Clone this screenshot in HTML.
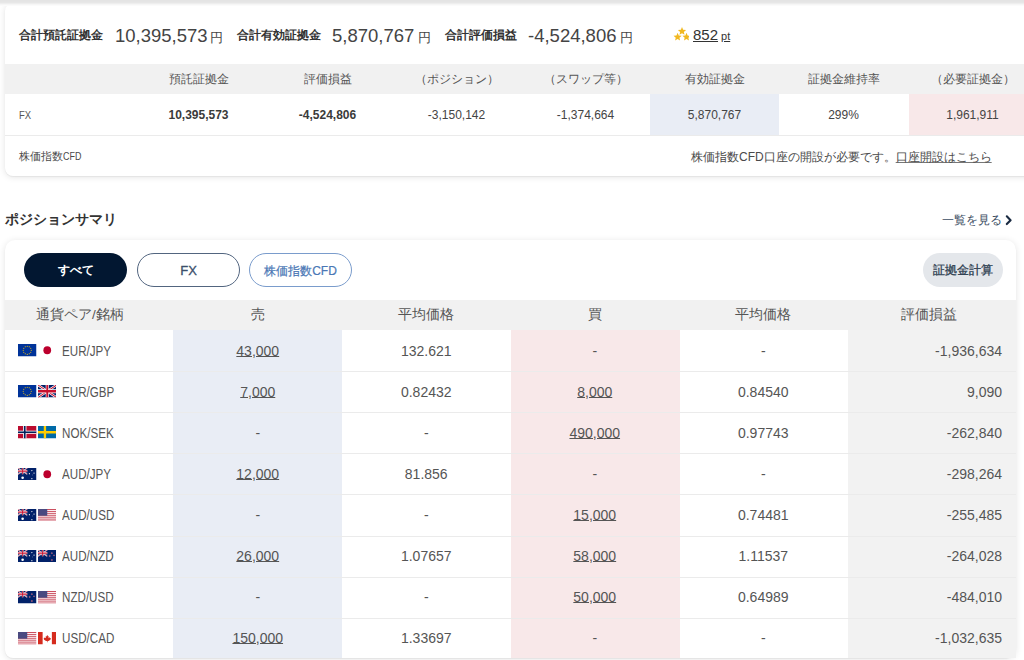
<!DOCTYPE html>
<html><head><meta charset="utf-8">
<style>
html,body{margin:0;padding:0;width:1024px;height:660px;overflow:hidden;background:#fff;font-family:"Liberation Sans",sans-serif;color:#333;}
.abs{position:absolute;}
.topband{position:absolute;left:0;width:1024px;height:1px;z-index:5;}
.card1{position:absolute;left:5px;top:3px;width:1032px;height:173px;background:#fff;border-radius:8px;box-shadow:0 1px 1px rgba(0,0,0,0.05),0 1px 7px rgba(0,0,0,0.11);overflow:hidden;}
.card2{position:absolute;left:5px;top:240px;width:1011px;height:418px;background:#fff;border-radius:10px 10px 10px 8px;box-shadow:0 1px 1px rgba(0,0,0,0.05),0 1px 7px rgba(0,0,0,0.11);}
.t{position:absolute;white-space:nowrap;}
.lbl{font-size:12px;font-weight:bold;color:#333;margin-top:-1px;}
.big{font-size:18.5px;color:#444;}
.yen{font-size:13px;color:#444;}
.hdr1{position:absolute;left:0;top:61px;width:1032px;height:30px;background:#f1f1f1;}
.row1{position:absolute;left:0;width:1032px;}
.c1{position:absolute;top:0;height:41px;width:129px;text-align:center;font-size:12px;line-height:41px;color:#444;}
.h1c{position:absolute;top:0;height:30px;width:129px;text-align:center;font-size:12px;line-height:30px;color:#555;}
.sep{position:absolute;left:0;height:1px;background:#ebebeb;}
.th{position:absolute;top:0;height:30px;line-height:30px;text-align:center;font-size:13.5px;color:#555;}
.td{position:absolute;top:0;height:40px;line-height:40px;text-align:center;font-size:14px;color:#555;}
.u{text-decoration:underline;text-underline-offset:0px;}
.flag{position:absolute;width:18.5px;height:12.5px;top:13.2px;overflow:hidden;}
.btn{position:absolute;top:13px;height:34px;border-radius:17px;box-sizing:border-box;text-align:center;line-height:34px;font-size:12px;}
</style></head><body>
<svg width="0" height="0" style="position:absolute">
<defs>
<g id="uj">
 <rect width="60" height="30" fill="#012169"/>
 <path d="M0,0 L60,30 M60,0 L0,30" stroke="#fff" stroke-width="6"/>
 <path d="M0,0 L60,30 M60,0 L0,30" stroke="#c8102e" stroke-width="2.5"/>
 <path d="M30,0 V30 M0,15 H60" stroke="#fff" stroke-width="10"/>
 <path d="M30,0 V30 M0,15 H60" stroke="#c8102e" stroke-width="6"/>
</g>
<symbol id="f-eu" viewBox="0 0 60 40">
 <rect width="60" height="40" fill="#003399"/>
 <g fill="#ffcc00">
  <circle cx="30" cy="7" r="1.8"/><circle cx="36.5" cy="8.7" r="1.8"/><circle cx="41.3" cy="13.5" r="1.8"/><circle cx="43" cy="20" r="1.8"/><circle cx="41.3" cy="26.5" r="1.8"/><circle cx="36.5" cy="31.3" r="1.8"/><circle cx="30" cy="33" r="1.8"/><circle cx="23.5" cy="31.3" r="1.8"/><circle cx="18.7" cy="26.5" r="1.8"/><circle cx="17" cy="20" r="1.8"/><circle cx="18.7" cy="13.5" r="1.8"/><circle cx="23.5" cy="8.7" r="1.8"/>
 </g>
</symbol>
<symbol id="f-jp" viewBox="0 0 60 40">
 <rect width="60" height="40" fill="#fff"/>
 <circle cx="30" cy="20" r="12.5" fill="#bc002d"/>
</symbol>
<symbol id="f-gb" viewBox="0 0 60 40">
 <g transform="scale(1,1.3333)"><use href="#uj"/></g>
</symbol>
<symbol id="f-no" viewBox="0 0 60 40">
 <rect width="60" height="40" fill="#ba0c2f"/>
 <rect x="16.4" width="10.9" height="40" fill="#fff"/><rect y="15" width="60" height="10" fill="#fff"/>
 <rect x="19.1" width="5.5" height="40" fill="#00205b"/><rect y="17.5" width="60" height="5" fill="#00205b"/>
</symbol>
<symbol id="f-se" viewBox="0 0 60 40">
 <rect width="60" height="40" fill="#006aa7"/>
 <rect x="18.75" width="7.5" height="40" fill="#fecc00"/><rect y="16" width="60" height="8" fill="#fecc00"/>
</symbol>
<symbol id="f-au" viewBox="0 0 60 40">
 <rect width="60" height="40" fill="#012169"/>
 <g transform="scale(0.5,0.6667)"><use href="#uj"/></g>
 <circle cx="15" cy="31" r="4.2" fill="#fff"/>
 <circle cx="45" cy="8" r="2" fill="#fff"/><circle cx="37" cy="18" r="2" fill="#fff"/><circle cx="52" cy="16" r="2" fill="#fff"/><circle cx="45" cy="34" r="2" fill="#fff"/><circle cx="48" cy="22" r="1" fill="#fff"/>
</symbol>
<symbol id="f-nz" viewBox="0 0 60 40">
 <rect width="60" height="40" fill="#012169"/>
 <g transform="scale(0.5,0.6667)"><use href="#uj"/></g>
 <g fill="#c8102e" stroke="#fff" stroke-width="0.8"><circle cx="45" cy="10" r="2"/><circle cx="38" cy="19" r="2"/><circle cx="52" cy="17" r="1.8"/><circle cx="45" cy="32" r="2.2"/></g>
</symbol>
<symbol id="f-us" viewBox="0 0 60 40">
 <rect width="60" height="40" fill="#fff"/>
 <g fill="#c9495a"><rect y="0" width="60" height="3.08"/><rect y="6.15" width="60" height="3.08"/><rect y="12.3" width="60" height="3.08"/><rect y="18.46" width="60" height="3.08"/><rect y="24.6" width="60" height="3.08"/><rect y="30.77" width="60" height="3.08"/><rect y="36.92" width="60" height="3.08"/></g>
 <rect width="30" height="21.5" fill="#4a4a80"/>
</symbol>
<symbol id="f-ca" viewBox="0 0 60 40">
 <rect width="60" height="40" fill="#fff"/>
 <rect width="15" height="40" fill="#d52b1e"/><rect x="45" width="15" height="40" fill="#d52b1e"/>
 <path d="M30,9 L32.5,14 L35,13 L34,20 L38,17 L39,19.5 L42,19 L40,23 L41.5,24 L34,29 L31,28.5 L31,33 L29,33 L29,28.5 L26,29 L18.5,24 L20,23 L18,19 L21,19.5 L22,17 L26,20 L25,13 L27.5,14 Z" fill="#d52b1e"/>
</symbol>
</defs></svg>
<div class="topband" style="top:0px;background:#e4e4e4"></div><div class="topband" style="top:1px;background:#e5e5e5"></div><div class="topband" style="top:2px;background:#e7e7e7"></div><div class="topband" style="top:3px;background:#eeeeee"></div><div class="topband" style="top:4px;background:#f6f6f6"></div><div class="topband" style="top:5px;background:#fbfbfb"></div>

<!-- TOP CARD -->
<div class="card1">
  <div class="t lbl" style="left:14px;top:25px;">合計預託証拠金</div>
  <div class="t big" style="left:110px;top:21.5px;">10,395,573</div>
  <div class="t yen" style="left:205px;top:26px;">円</div>
  <div class="t lbl" style="left:232px;top:25px;">合計有効証拠金</div>
  <div class="t big" style="left:327px;top:21.5px;">5,870,767</div>
  <div class="t yen" style="left:413px;top:26px;">円</div>
  <div class="t lbl" style="left:440px;top:25px;">合計評価損益</div>
  <div class="t big" style="left:523px;top:21.5px;">-4,524,806</div>
  <div class="t yen" style="left:615px;top:26px;">円</div>
  <svg class="abs" style="left:664px;top:22px" width="20" height="20" viewBox="664 25 20 20"><g fill="#f1b820"><path transform="translate(677,31.3)" d="M0.00,-4.30 L1.14,-1.57 L4.09,-1.33 L1.84,0.60 L2.53,3.48 L0.00,1.94 L-2.53,3.48 L-1.84,0.60 L-4.09,-1.33 L-1.14,-1.57Z"/><path transform="translate(672.6,37.1)" d="M0.00,-4.30 L1.14,-1.57 L4.09,-1.33 L1.84,0.60 L2.53,3.48 L0.00,1.94 L-2.53,3.48 L-1.84,0.60 L-4.09,-1.33 L-1.14,-1.57Z"/><path transform="translate(681.5,37.1)" d="M0.00,-4.30 L1.14,-1.57 L4.09,-1.33 L1.84,0.60 L2.53,3.48 L0.00,1.94 L-2.53,3.48 L-1.84,0.60 L-4.09,-1.33 L-1.14,-1.57Z"/></g></svg>
  <div class="t" style="left:688px;top:23px;font-size:15px;color:#333;text-decoration:underline;">852<span style="font-size:11px;margin-left:3px">pt</span></div>

  <div class="hdr1">
    <div class="h1c" style="left:129px">預託証拠金</div>
    <div class="h1c" style="left:258px">評価損益</div>
    <div class="h1c" style="left:387px">（ポジション）</div>
    <div class="h1c" style="left:516px">（スワップ等）</div>
    <div class="h1c" style="left:645px">有効証拠金</div>
    <div class="h1c" style="left:774px">証拠金維持率</div>
    <div class="h1c" style="left:903px">（必要証拠金）</div>
  </div>
  <div class="abs" style="left:645.3px;top:91px;width:129px;height:41px;background:#e9edf5"></div>
  <div class="abs" style="left:904px;top:91px;width:129px;height:41px;background:#f8e8e9"></div>
  <div class="row1" style="top:92px;height:41px;">
    <div class="c1" style="left:14px;width:auto;font-size:11px;color:#555"><span style="display:inline-block;transform:scaleX(0.86);transform-origin:0 50%">FX</span></div>
    <div class="c1" style="left:129px;font-weight:bold;color:#3a3a3a">10,395,573</div>
    <div class="c1" style="left:258px;font-weight:bold;color:#3a3a3a">-4,524,806</div>
    <div class="c1" style="left:387px">-3,150,142</div>
    <div class="c1" style="left:516px">-1,374,664</div>
    <div class="c1" style="left:645px">5,870,767</div>
    <div class="c1" style="left:774px">299%</div>
    <div class="c1" style="left:903px">1,961,911</div>
  </div>
  <div class="sep" style="top:132px;width:1032px"></div>
  <div class="t" style="left:14px;top:147px;font-size:10.5px;color:#4a4a4a">株価指数<span style="display:inline-block;transform:scaleX(0.85);transform-origin:0 50%">CFD</span></div>
  <div class="t" style="left:686px;top:146px;font-size:12px;color:#4a4a4a">株価指数CFD口座の開設が必要です。<span style="text-decoration:underline;text-decoration-color:#777;text-underline-offset:1px">口座開設はこちら</span></div>
</div>

<!-- HEADING -->
<div class="t" style="left:5px;top:211px;font-size:14px;font-weight:bold;color:#333">ポジションサマリ</div>
<div class="t" style="left:942px;top:212px;font-size:12px;color:#3c4d63">一覧を見る</div>
<svg class="abs" style="left:1004px;top:214px" width="10" height="12" viewBox="0 0 10 12"><path d="M2.8,2.3 L6.6,6.2 L2.8,10.1" fill="none" stroke="#1b2b42" stroke-width="2.1" stroke-linecap="round" stroke-linejoin="round"/></svg>

<!-- BOTTOM CARD -->
<div class="card2">
  <div class="btn" style="left:19px;width:103px;background:#021731;color:#fff;font-weight:bold">すべて</div>
  <div class="btn" style="left:132px;width:103px;border:1px solid #52657f;color:#3b4f6b;font-size:13px;-webkit-text-stroke:0.3px #3b4f6b">FX</div>
  <div class="btn" style="left:244px;width:103px;border:1px solid #7a9ccc;color:#4a77b5;-webkit-text-stroke:0.2px #4a77b5">株価指数CFD</div>
  <div class="btn" style="left:918px;width:80px;background:#e4e7eb;color:#2d3e50;-webkit-text-stroke:0.3px #2d3e50">証拠金計算</div>

<!--TABLE-->
<div class="abs" style="left:168px;top:90px;width:169px;height:328px;background:#e9edf5"></div>
<div class="abs" style="left:505.5px;top:90px;width:169px;height:328px;background:#f8e8e9"></div>
<div class="abs" style="left:842.50px;top:90px;width:168.50px;height:328px;background:#f2f2f2"></div>
<div class="abs" style="left:0;top:60px;width:1011px;height:30px;background:#f1f1f1">
<div class="th" style="left:31px;text-align:left">通貨ペア/銘柄</div>
<div class="th" style="left:168.50px;width:168.50px">売</div>
<div class="th" style="left:337.00px;width:168.50px">平均価格</div>
<div class="th" style="left:505.50px;width:168.50px">買</div>
<div class="th" style="left:674.00px;width:168.50px">平均価格</div>
<div class="th" style="left:842.50px;width:163.50px">評価損益</div>
</div>
<div class="abs" style="left:0;top:90.90px;width:1011px;height:40px">
<div class="td" style="left:57px;text-align:left;font-size:14px"><span style="display:inline-block;transform:scaleX(0.83);transform-origin:0 50%">EUR/JPY</span></div>
<div class="td" style="left:168.50px;width:168.50px"><span class="u">43,000</span></div>
<div class="td" style="left:337.00px;width:168.50px"><span class="">132.621</span></div>
<div class="td" style="left:505.50px;width:168.50px"><span class="">-</span></div>
<div class="td" style="left:674.00px;width:168.50px"><span class="">-</span></div>
<div class="td" style="left:842.50px;width:154.50px;text-align:right">-1,936,634</div>
</div>
<svg class="flag" style="left:13.2px;top:104.00px" viewBox="0 0 60 40" preserveAspectRatio="none"><use href="#f-eu"/></svg>
<svg class="flag" style="left:32.6px;top:104.00px" viewBox="0 0 60 40" preserveAspectRatio="none"><use href="#f-jp"/></svg>
<div class="sep" style="top:130.90px;width:1011px"></div>
<div class="abs" style="left:0;top:131.90px;width:1011px;height:40px">
<div class="td" style="left:57px;text-align:left;font-size:14px"><span style="display:inline-block;transform:scaleX(0.83);transform-origin:0 50%">EUR/GBP</span></div>
<div class="td" style="left:168.50px;width:168.50px"><span class="u">7,000</span></div>
<div class="td" style="left:337.00px;width:168.50px"><span class="">0.82432</span></div>
<div class="td" style="left:505.50px;width:168.50px"><span class="u">8,000</span></div>
<div class="td" style="left:674.00px;width:168.50px"><span class="">0.84540</span></div>
<div class="td" style="left:842.50px;width:154.50px;text-align:right">9,090</div>
</div>
<svg class="flag" style="left:13.2px;top:145.17px" viewBox="0 0 60 40" preserveAspectRatio="none"><use href="#f-eu"/></svg>
<svg class="flag" style="left:32.6px;top:145.17px" viewBox="0 0 60 40" preserveAspectRatio="none"><use href="#f-gb"/></svg>
<div class="sep" style="top:172.07px;width:1011px"></div>
<div class="abs" style="left:0;top:172.90px;width:1011px;height:40px">
<div class="td" style="left:57px;text-align:left;font-size:14px"><span style="display:inline-block;transform:scaleX(0.83);transform-origin:0 50%">NOK/SEK</span></div>
<div class="td" style="left:168.50px;width:168.50px"><span class="">-</span></div>
<div class="td" style="left:337.00px;width:168.50px"><span class="">-</span></div>
<div class="td" style="left:505.50px;width:168.50px"><span class="u">490,000</span></div>
<div class="td" style="left:674.00px;width:168.50px"><span class="">0.97743</span></div>
<div class="td" style="left:842.50px;width:154.50px;text-align:right">-262,840</div>
</div>
<svg class="flag" style="left:13.2px;top:186.34px" viewBox="0 0 60 40" preserveAspectRatio="none"><use href="#f-no"/></svg>
<svg class="flag" style="left:32.6px;top:186.34px" viewBox="0 0 60 40" preserveAspectRatio="none"><use href="#f-se"/></svg>
<div class="sep" style="top:213.24px;width:1011px"></div>
<div class="abs" style="left:0;top:213.90px;width:1011px;height:40px">
<div class="td" style="left:57px;text-align:left;font-size:14px"><span style="display:inline-block;transform:scaleX(0.83);transform-origin:0 50%">AUD/JPY</span></div>
<div class="td" style="left:168.50px;width:168.50px"><span class="u">12,000</span></div>
<div class="td" style="left:337.00px;width:168.50px"><span class="">81.856</span></div>
<div class="td" style="left:505.50px;width:168.50px"><span class="">-</span></div>
<div class="td" style="left:674.00px;width:168.50px"><span class="">-</span></div>
<div class="td" style="left:842.50px;width:154.50px;text-align:right">-298,264</div>
</div>
<svg class="flag" style="left:13.2px;top:227.51px" viewBox="0 0 60 40" preserveAspectRatio="none"><use href="#f-au"/></svg>
<svg class="flag" style="left:32.6px;top:227.51px" viewBox="0 0 60 40" preserveAspectRatio="none"><use href="#f-jp"/></svg>
<div class="sep" style="top:254.41px;width:1011px"></div>
<div class="abs" style="left:0;top:254.90px;width:1011px;height:40px">
<div class="td" style="left:57px;text-align:left;font-size:14px"><span style="display:inline-block;transform:scaleX(0.83);transform-origin:0 50%">AUD/USD</span></div>
<div class="td" style="left:168.50px;width:168.50px"><span class="">-</span></div>
<div class="td" style="left:337.00px;width:168.50px"><span class="">-</span></div>
<div class="td" style="left:505.50px;width:168.50px"><span class="u">15,000</span></div>
<div class="td" style="left:674.00px;width:168.50px"><span class="">0.74481</span></div>
<div class="td" style="left:842.50px;width:154.50px;text-align:right">-255,485</div>
</div>
<svg class="flag" style="left:13.2px;top:268.68px" viewBox="0 0 60 40" preserveAspectRatio="none"><use href="#f-au"/></svg>
<svg class="flag" style="left:32.6px;top:268.68px" viewBox="0 0 60 40" preserveAspectRatio="none"><use href="#f-us"/></svg>
<div class="sep" style="top:295.58px;width:1011px"></div>
<div class="abs" style="left:0;top:295.90px;width:1011px;height:40px">
<div class="td" style="left:57px;text-align:left;font-size:14px"><span style="display:inline-block;transform:scaleX(0.83);transform-origin:0 50%">AUD/NZD</span></div>
<div class="td" style="left:168.50px;width:168.50px"><span class="u">26,000</span></div>
<div class="td" style="left:337.00px;width:168.50px"><span class="">1.07657</span></div>
<div class="td" style="left:505.50px;width:168.50px"><span class="u">58,000</span></div>
<div class="td" style="left:674.00px;width:168.50px"><span class="">1.11537</span></div>
<div class="td" style="left:842.50px;width:154.50px;text-align:right">-264,028</div>
</div>
<svg class="flag" style="left:13.2px;top:309.85px" viewBox="0 0 60 40" preserveAspectRatio="none"><use href="#f-au"/></svg>
<svg class="flag" style="left:32.6px;top:309.85px" viewBox="0 0 60 40" preserveAspectRatio="none"><use href="#f-nz"/></svg>
<div class="sep" style="top:336.75px;width:1011px"></div>
<div class="abs" style="left:0;top:336.90px;width:1011px;height:40px">
<div class="td" style="left:57px;text-align:left;font-size:14px"><span style="display:inline-block;transform:scaleX(0.83);transform-origin:0 50%">NZD/USD</span></div>
<div class="td" style="left:168.50px;width:168.50px"><span class="">-</span></div>
<div class="td" style="left:337.00px;width:168.50px"><span class="">-</span></div>
<div class="td" style="left:505.50px;width:168.50px"><span class="u">50,000</span></div>
<div class="td" style="left:674.00px;width:168.50px"><span class="">0.64989</span></div>
<div class="td" style="left:842.50px;width:154.50px;text-align:right">-484,010</div>
</div>
<svg class="flag" style="left:13.2px;top:351.02px" viewBox="0 0 60 40" preserveAspectRatio="none"><use href="#f-nz"/></svg>
<svg class="flag" style="left:32.6px;top:351.02px" viewBox="0 0 60 40" preserveAspectRatio="none"><use href="#f-us"/></svg>
<div class="sep" style="top:377.92px;width:1011px"></div>
<div class="abs" style="left:0;top:377.90px;width:1011px;height:40px">
<div class="td" style="left:57px;text-align:left;font-size:14px"><span style="display:inline-block;transform:scaleX(0.83);transform-origin:0 50%">USD/CAD</span></div>
<div class="td" style="left:168.50px;width:168.50px"><span class="u">150,000</span></div>
<div class="td" style="left:337.00px;width:168.50px"><span class="">1.33697</span></div>
<div class="td" style="left:505.50px;width:168.50px"><span class="">-</span></div>
<div class="td" style="left:674.00px;width:168.50px"><span class="">-</span></div>
<div class="td" style="left:842.50px;width:154.50px;text-align:right">-1,032,635</div>
</div>
<svg class="flag" style="left:13.2px;top:392.19px" viewBox="0 0 60 40" preserveAspectRatio="none"><use href="#f-us"/></svg>
<svg class="flag" style="left:32.6px;top:392.19px" viewBox="0 0 60 40" preserveAspectRatio="none"><use href="#f-ca"/></svg>
<!--/TABLE-->
</div>
</body></html>
